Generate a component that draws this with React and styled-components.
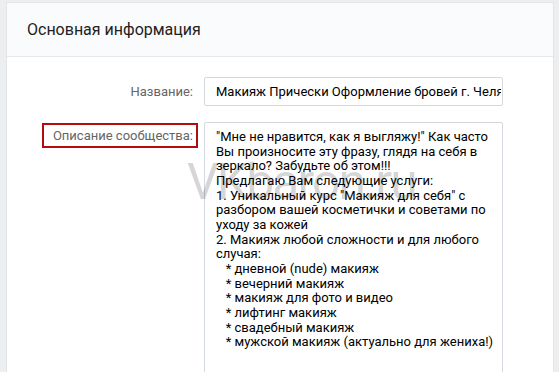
import styled, { createGlobalStyle } from 'styled-components';

const description = `"Мне не нравится, как я выгляжу!" Как часто Вы произносите эту фразу, глядя на себя в зеркало? Забудьте об этом!!!
Предлагаю Вам следующие услуги:
1. Уникальный курс "Макияж для себя" с разбором вашей косметички и советами по уходу за кожей
2. Макияж любой сложности и для любого случая:
   * дневной (nude) макияж
   * вечерний макияж
   * макияж для фото и видео
   * лифтинг макияж
   * свадебный макияж
   * мужской макияж (актуально для жениха!)`;

const GlobalStyle = createGlobalStyle`
  html, body {
    margin: 0;
    height: 100%;
    overflow: hidden;
    background: #edeef0;
    font-family: Roboto, "Open Sans", Arial, sans-serif;
  }
`;

const Page = styled.div`
  padding: 2px 5px 0 6px;
  height: 372px;
  box-sizing: border-box;
`;

const Card = styled.section`
  background: #fff;
  border: 1px solid #e3e4e8;
  border-bottom: none;
  height: 100%;
  box-sizing: border-box;
  position: relative;
  overflow: hidden;
`;

const Header = styled.header`
  height: 53px;
  display: flex;
  align-items: center;
  padding: 0 20px;
  background: #fafbfc;
  border-bottom: 1px solid #e7e8ec;
  font-size: 16px;
  color: #222;
`;

const Form = styled.div`
  padding-top: 20px;
  display: flex;
  flex-direction: column;
  gap: 16px;
`;

const Row = styled.div`
  display: grid;
  grid-template-columns: 186px 299px;
  column-gap: 11px;
  align-items: start;
`;

const LabelCell = styled.div`
  display: flex;
  justify-content: flex-end;
  padding-top: ${(p) => p.$top}px;
`;

const Label = styled.span`
  white-space: nowrap;
  font-size: 13px;
  line-height: 15px;
  color: #656565;
  ${(p) =>
    p.$marked &&
    `
    margin: -3px -3px -3px 0;
    padding: 3px 3px 3px 9px;
    outline: 2px solid #b00d0d;
  `}
`;

const TextInput = styled.input`
  box-sizing: border-box;
  width: 100%;
  height: 29px;
  padding: 0 1px 0 11px;
  border: 1px solid #d3d9de;
  border-radius: 2px;
  font-family: Roboto, "Open Sans", Arial, sans-serif;
  font-size: 13px;
  color: #000;
  background: #fff;
`;

const TextArea = styled.textarea`
  box-sizing: border-box;
  width: 100%;
  height: 290px;
  padding: 7px 4px 7px 11px;
  border: 1px solid #d3d9de;
  border-radius: 2px;
  resize: none;
  font-family: Roboto, "Open Sans", Arial, sans-serif;
  font-size: 13px;
  line-height: 14.67px;
  color: #000;
  white-space: pre-wrap;
  overflow: hidden;
`;

const Watermark = styled.div`
  position: absolute;
  left: 180px;
  top: 150px;
  font-family: Roboto, Arial, sans-serif;
  font-size: 50px;
  letter-spacing: -2px;
  color: rgba(0, 0, 0, 0.16);
  pointer-events: none;
`;

export default function App() {
  return (
    <>
      <GlobalStyle />
      <Page>
        <Card>
          <Header>Основная информация</Header>
          <Form>
            <Row>
              <LabelCell $top={7}>
                <Label>Название:</Label>
              </LabelCell>
              <TextInput readOnly value="Макияж Прически Оформление бровей г. Челябинск" />
            </Row>
            <Row>
              <LabelCell $top={6}>
                <Label $marked>Описание сообщества:</Label>
              </LabelCell>
              <TextArea readOnly value={description} />
            </Row>
          </Form>
          <Watermark>VKbaron.ru</Watermark>
        </Card>
      </Page>
    </>
  );
}
